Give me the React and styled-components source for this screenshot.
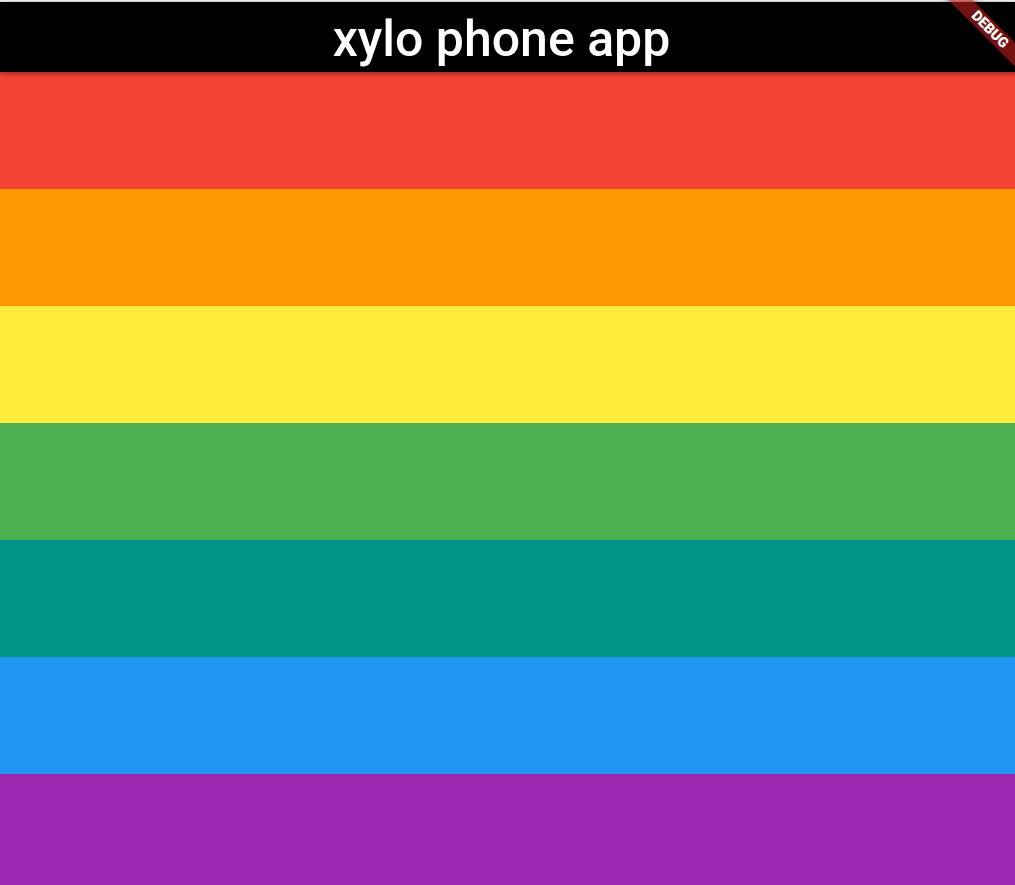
import styled, { createGlobalStyle } from "styled-components";

const GlobalStyle = createGlobalStyle`
  html, body {
    margin: 0;
    padding: 0;
    overflow: hidden;
    background: #ffffff;
    font-family: Roboto, "Noto Sans", sans-serif;
  }
`;

// material colours, one bar per note
const NOTES = [
  { id: 1, color: "#f44336" },
  { id: 2, color: "#ff9800" },
  { id: 3, color: "#ffeb3b" },
  { id: 4, color: "#4caf50" },
  { id: 5, color: "#009688" },
  { id: 6, color: "#2196f3" },
  { id: 7, color: "#9c27b0" },
];

const Screen = styled.div`
  position: relative;
  height: 100vh;
  display: flex;
  flex-direction: column;
  overflow: hidden;
`;

const StatusStrip = styled.div`
  flex: 0 0 2px;
  background: linear-gradient(#f4f4f4, #d6d6d6);
`;

const AppBar = styled.header`
  position: relative;
  z-index: 2;
  flex: 0 0 70px;
  display: flex;
  align-items: center;
  justify-content: center;
  padding-right: 12px;
  background: #000000;
  box-shadow: 0 2px 4px rgba(0, 0, 0, 0.35);
`;

const Title = styled.h1`
  margin: 4px 0 0 0;
  color: #ffffff;
  font-family: Roboto, sans-serif;
  font-size: 50px;
  font-weight: 500;
  letter-spacing: 0;
  line-height: 1;
`;

const Keys = styled.main`
  display: flex;
  flex-direction: column;
`;

const Key = styled.button`
  flex: 0 0 117px;
  height: 117px;
  border: none;
  padding: 0;
  margin: 0;
  background: ${(p) => p.$color};
  cursor: pointer;
`;

const DebugBanner = styled.div`
  position: absolute;
  z-index: 5;
  top: 21px;
  right: -31px;
  width: 112px;
  height: 17px;
  transform: rotate(45deg);
  background: rgba(183, 28, 28, 0.63);
  box-shadow: 0 0 8px rgba(0, 0, 0, 0.5);
  color: #ffffff;
  font-family: Roboto, sans-serif;
  font-size: 14.3px;
  font-weight: 900;
  line-height: 17px;
  text-align: center;
  pointer-events: none;
`;

function App() {
  return (
    <>
      <GlobalStyle />
      <Screen>
        <StatusStrip />
        <AppBar>
          <Title>xylo phone app</Title>
        </AppBar>
        <Keys>
          {NOTES.map((note) => (
            <Key key={note.id} $color={note.color} aria-label={`note ${note.id}`} />
          ))}
        </Keys>
        <DebugBanner>DEBUG</DebugBanner>
      </Screen>
    </>
  );
}

export default App;
